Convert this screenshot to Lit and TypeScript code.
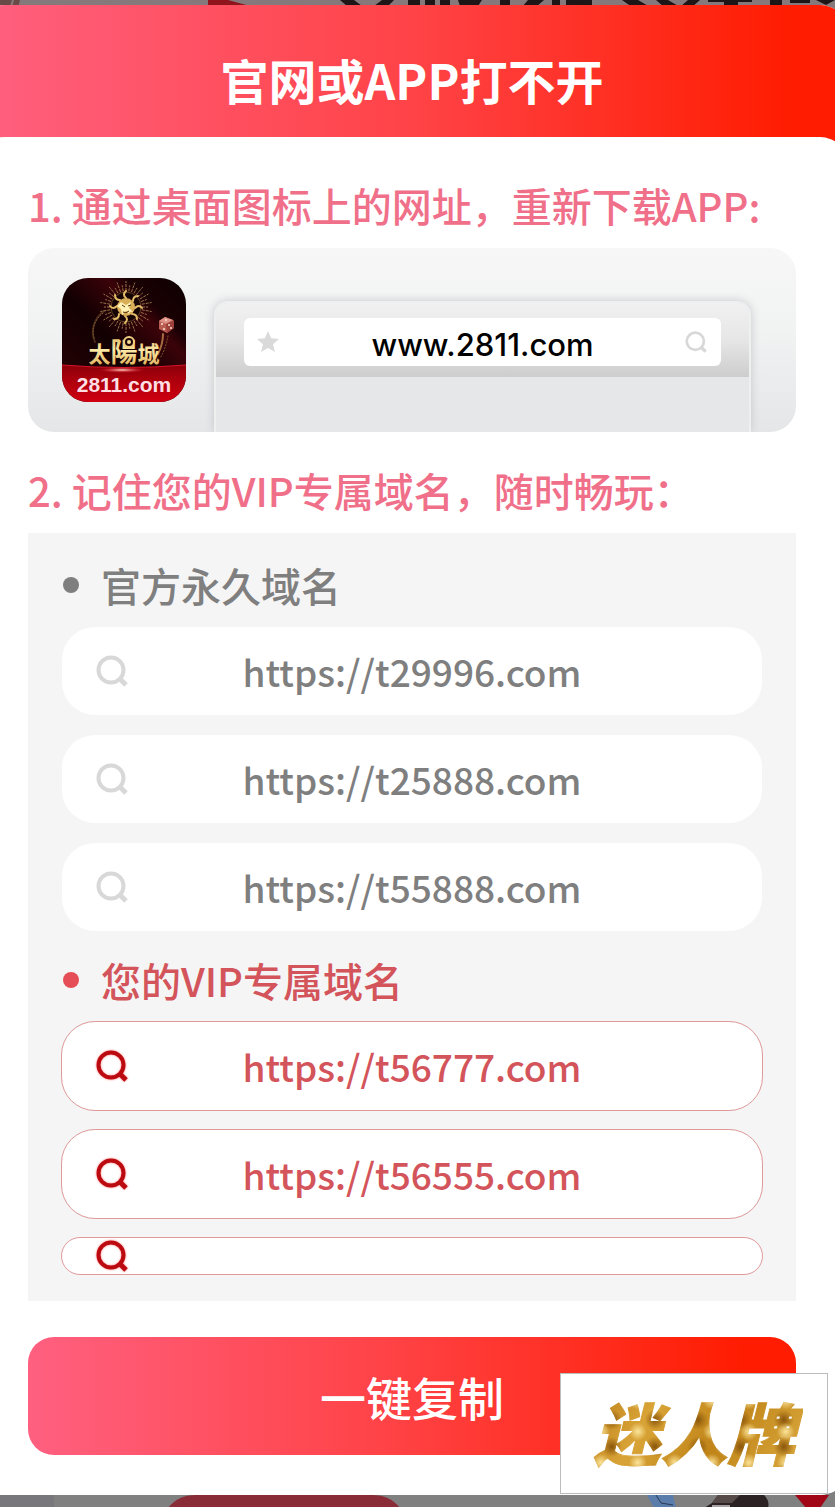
import { LitElement, html, css, svg } from "lit";
import { customElement, property } from "lit/decorators.js";

interface DomainGroup {
  title: string;
  vip: boolean;
  domains: string[];
}

const GROUPS: DomainGroup[] = [
  {
    title: "官方永久域名",
    vip: false,
    domains: ["https://t29996.com", "https://t25888.com", "https://t55888.com"],
  },
  {
    title: "您的VIP专属域名",
    vip: true,
    domains: ["https://t56777.com", "https://t56555.com", ""],
  },
];

const rays = (count: number, cx: number, cy: number, from: number, to: number) =>
  Array.from({ length: count }, (_, i) => {
    const a = (i / count) * Math.PI * 2;
    const end = i % 2 ? to : to - 4;
    return svg`<line
      x1=${cx + Math.cos(a) * from} y1=${cy + Math.sin(a) * from}
      x2=${cx + Math.cos(a) * end} y2=${cy + Math.sin(a) * end} />`;
  });

@customElement("app-icon")
export class AppIcon extends LitElement {
  static styles = css`
    :host {
      display: block;
      flex: none;
      width: 124px;
      height: 124px;
      border-radius: 26px;
      overflow: hidden;
    }

    svg {
      display: block;
      width: 100%;
      height: 100%;
    }

    .name {
      font: bold 22px "Noto Sans CJK TC", sans-serif;
    }

    .big {
      font-size: 27px;
    }

    .domain {
      font: bold 21px "Liberation Sans", sans-serif;
    }
  `;

  render() {
    return html`
      <svg viewBox="0 0 124 124">
        <defs>
          <linearGradient id="night" x1="0" y1="1" x2="1" y2="0">
            <stop offset="0" stop-color="#2a0205" />
            <stop offset="0.45" stop-color="#120002" />
            <stop offset="0.68" stop-color="#3a0309" />
            <stop offset="0.76" stop-color="#1a0103" />
            <stop offset="1" stop-color="#0c0001" />
          </linearGradient>
          <linearGradient id="base" x1="0" y1="0" x2="0" y2="1">
            <stop offset="0" stop-color="#8a0009" />
            <stop offset="0.35" stop-color="#a8000c" />
            <stop offset="1" stop-color="#d00010" />
          </linearGradient>
          <linearGradient id="gold" x1="0" y1="0" x2="0" y2="1">
            <stop offset="0" stop-color="#d9a84e" />
            <stop offset="0.5" stop-color="#fbe9a6" />
            <stop offset="1" stop-color="#d8a447" />
          </linearGradient>
          <radialGradient id="spark">
            <stop offset="0" stop-color="#ffd9c8" />
            <stop offset="1" stop-color="#e00016" stop-opacity="0" />
          </radialGradient>
        </defs>
        <rect width="124" height="124" fill="url(#night)" />
        <g fill="none" stroke="#8a6238" stroke-linecap="round">
          <path d="M33 64C28 53 32 40 42 33" stroke-width="2" opacity=".4" />
          <path d="M32 60C29 50 34 40 41 35" stroke-width="1" stroke-dasharray="1 2" />
          <path d="M101 56C101 64 99 70 96 76" stroke="#d49a58" stroke-width="2" opacity=".7" />
          <path d="M106 58C104 68 101 76 98 80" stroke-width="1" stroke-dasharray="1 2" />
        </g>
        <g stroke="#94764a" stroke-width="1" stroke-dasharray="3 1">${rays(36, 64, 29, 16, 26)}</g>
        <circle cx="64" cy="29" r="15" fill="#160304" stroke="#5d4426" />
        <g fill="none" stroke="#e5bd69" stroke-width="2" stroke-linecap="round">
          <path
            d="M64 20q-4-3 0-7M71 23q0-5 5-5M73 30q4-4 7 0M70 36q5 0 5 5M63 38q4 3 0 7M57 36q0 5-5 5M55 28q-4 4-7 0M58 22q-5 0-5-5"
          />
        </g>
        <circle cx="64" cy="29" r="9" fill="#d9ae58" />
        <path d="M59 24l5 3 5-3-2 6 4 4-7-1-4 4-1-6-4-3zM65 31l4 2-3 3z" fill="#fff0b3" />
        <path d="M60 27l3 2M66 28l3-1M61 34q3 2 6-1" fill="none" stroke="#553511" />
        <g>
          <path d="M97 43l6-4 8 3 1 8-7 5-8-4z" fill="#b95c52" />
          <path d="M97 43l6-4 8 3-7 4z" fill="#dd9085" />
          <path d="M104 46l8-4v8l-7 5z" fill="#9d4039" />
          <g fill="#ffe2d6">
            <circle cx="100" cy="46" r="1" />
            <circle cx="102" cy="51" r="1" />
            <circle cx="107" cy="47" r="1" />
            <circle cx="109" cy="50" r="1" />
            <circle cx="104" cy="42" r="1" />
          </g>
        </g>
        <path d="M0 87Q62 92 124 87V124H0Z" fill="url(#base)" />
        <path d="M0 87Q62 92 124 87" fill="none" stroke="#d8152a" />
        <ellipse cx="60" cy="92" rx="24" ry="3" fill="url(#spark)" />
        <text class="name" x="62" y="84" fill="url(#gold)" text-anchor="middle"
          >太<tspan class="big">陽</tspan>城</text
        >
        <circle cx="67" cy="64" r="5" fill="#1c0608" stroke="#efcf80" stroke-width="2" />
        <circle cx="67" cy="64" r="2" fill="#f6dc92" />
        <text class="domain" x="62" y="114" fill="#ffdfe4" text-anchor="middle">2811.com</text>
      </svg>
    `;
  }
}

@customElement("search-icon")
export class SearchIcon extends LitElement {
  static styles = css`
    :host {
      display: block;
      flex: none;
      width: 32px;
      height: 32px;
    }

    svg {
      display: block;
      width: 100%;
      height: 100%;
      overflow: visible;
    }
  `;

  render() {
    return html`
      <svg viewBox="0 0 32 32" fill="none" stroke="currentColor" stroke-width="4">
        <circle cx="15" cy="15" r="12.5" />
        <path d="M23.500 23.500L30 30" stroke-width="5" />
      </svg>
    `;
  }
}

@customElement("domain-row")
export class DomainRow extends LitElement {
  @property() url = "";
  @property({ type: Boolean, reflect: true }) vip = false;

  static styles = css`
    :host {
      display: block;
      color: #7f7f7f;
    }

    .row {
      display: grid;
      grid-template-columns: 1fr auto 1fr;
      align-items: center;
      min-height: 38px;
      box-sizing: border-box;
      padding: 0 34px;
      border: 1px solid transparent;
      border-radius: 34px;
      background: white;
      background-clip: padding-box;
      color: inherit;
      font-size: 37px;
      line-height: 60px;
      text-decoration: none;
    }

    .filled {
      padding: 14px 34px;
    }

    search-icon {
      color: #d8d8d8;
    }

    :host([vip]) {
      color: #d3545a;
    }

    :host([vip]) .row {
      border-color: #e09a9a;
    }

    :host([vip]) search-icon {
      color: #bb0a10;
      filter: drop-shadow(0 0 1px #ff8080);
    }
  `;

  render() {
    if (!this.url) {
      return html`<div class="row"><search-icon></search-icon></div>`;
    }
    return html`
      <a class="row filled" href=${this.url}>
        <search-icon></search-icon>
        <span>${this.url}</span>
      </a>
    `;
  }
}

@customElement("app-root")
export class AppRoot extends LitElement {
  static styles = css`
    :host {
      display: block;
      position: relative;
      overflow: hidden;
      background: #808080;
      font-family: "Noto Sans CJK SC", "Noto Sans", sans-serif;
      font-weight: 500;
    }

    h1,
    h2,
    h3,
    ul {
      margin: 0;
      padding: 0;
      font-weight: inherit;
      list-style: none;
    }

    .behind {
      display: block;
      width: 100%;
    }

    .behind.top {
      height: 12px;
    }

    .behind.bottom {
      height: 41px;
      margin-top: -28px;
    }

    .dialog {
      position: relative;
      z-index: 1;
      margin: -7px -13px 0 -24px;
      border-radius: 28px;
      overflow: hidden;
      background: white;
    }

    .header {
      padding: 46px 0 58px;
      background: linear-gradient(90deg, #ff6080, #ff4347 50%, #ff1c00 94%);
      color: white;
      font-size: 48px;
      line-height: 56px;
      text-align: center;
      font-weight: bold;
    }

    .body {
      margin-top: -28px;
      padding: 38px 52px 40px;
      border-radius: 28px 28px 0 0;
      background: white;
    }

    .heading {
      color: #f0708a;
      font-size: 40px;
      line-height: 60px;
      white-space: nowrap;
      margin-bottom: 13px;
    }

    .preview {
      display: flex;
      gap: 28px;
      padding: 30px 45px 0 34px;
      margin-bottom: 28px;
      border-radius: 26px;
      overflow: hidden;
      background: linear-gradient(#f7f7f7, #f1f2f2 45%, #e4e6e8);
    }

    app-icon {
      margin-bottom: 30px;
    }

    .browser {
      flex: 1;
      min-width: 0;
      margin-top: 23px;
      border: 2px solid #eeefef;
      border-bottom: 0;
      border-radius: 14px 14px 0 0;
      background: #e6e7e9;
      box-shadow: 0 0 10px #c4c8cb;
      overflow: hidden;
    }

    .toolbar {
      padding: 15px 28px 11px;
      background: linear-gradient(#f1f1f1, #e6e6e6 50%, #cdcdcd);
    }

    .address {
      display: flex;
      align-items: center;
      height: 48px;
      padding: 0 14px 0 12px;
      border-radius: 6px;
      background: white;
    }

    .address svg {
      flex: none;
      width: 24px;
      height: 24px;
    }

    .address input {
      flex: 1;
      min-width: 0;
      padding: 4px 0 0;
      border: 0;
      outline: 0;
      background: none;
      color: black;
      font: 500 31px Inter, sans-serif;
      text-align: center;
    }

    .address search-icon {
      width: 22px;
      height: 22px;
      color: #d8d8d8;
    }

    .panel {
      display: flex;
      flex-direction: column;
      gap: 18px;
      padding: 22px 33px 26px;
      background: #f5f5f5;
    }

    .group {
      color: #7f7f7f;
    }

    .vip {
      color: #d3545a;
    }

    .group h3 {
      display: flex;
      align-items: center;
      gap: 22px;
      padding-left: 2px;
      margin-bottom: 11px;
      font-size: 40px;
      line-height: 60px;
    }

    .dot {
      width: 16px;
      height: 16px;
      border-radius: 50%;
      background: currentColor;
    }

    .vip .dot {
      background: #e54e56;
    }

    .group ul {
      display: grid;
      gap: 18px;
    }

    .copy {
      display: block;
      width: 100%;
      margin-top: 36px;
      padding: 28px 0;
      border: 0;
      border-radius: 26px;
      background: linear-gradient(90deg, #ff6080, #ff4347 46%, #ff1c00 94%);
      color: white;
      font: inherit;
      font-size: 46px;
      line-height: 62px;
    }

    .badge {
      position: absolute;
      z-index: 2;
      right: 7px;
      bottom: 14px;
      box-sizing: border-box;
      width: 268px;
      padding: 12px 0 18px;
      border: 1px solid #bbbdbd;
      background: white;
      font-size: 67px;
      line-height: 89px;
      text-align: center;
    }

    .badge span {
      padding: 0 8px;
      background:
        radial-gradient(circle at 40% 60%, #fbe49a, transparent 9px) 0 0 / 37px 31px,
        radial-gradient(circle at 60% 40%, #8a560c, transparent 10px) 0 0 / 43px 27px,
        linear-gradient(120deg, #b87a16, #d9a437 30%, #c08418 60%, #dcab40);
      background-clip: text;
      -webkit-background-clip: text;
      -webkit-text-stroke: 1px transparent;
      color: transparent;
      font-style: italic;
      font-weight: 900;
    }
  `;

  renderGroup(group: DomainGroup) {
    return html`
      <section class="group ${group.vip ? "vip" : ""}">
        <h3><span class="dot"></span>${group.title}</h3>
        <ul>
          ${group.domains.map(
            (url) => html`<li><domain-row .url=${url} ?vip=${group.vip}></domain-row></li>`
          )}
        </ul>
      </section>
    `;
  }

  render() {
    return html`
      <svg class="behind top" viewBox="0 0 835 12" preserveAspectRatio="none">
        <rect width="835" height="12" fill="#85797b" />
        <path d="M0 0h12l-4 12H0zM14 0h6l-3 12h-6z" fill="#6a4a47" />
        <path d="M208 0h20l22 6v6h-42z" fill="#90141c" />
        <path
          d="M340 0h14l8 6h12l8-6h12l-12 12h-28zM408 0h12v12h-12zM425 0h10v12h-10zM440 0h10v12h-10zM458 0h24l-4 6h-18zM500 0h10v12h-10zM528 0h16l-8 7h-14zM552 0h8v12h-8zM566 0h26v6h-26zM622 0h16l12 7h-18zM656 0h12l12 7h-16zM688 0h12l-8 7h-12zM708 0h44v2h-44zM724 0h14v12h-14zM770 0h12v12h-12zM790 0h20v3h-20zM816 0h19l-9 5z"
          fill="#1d1516"
        />
      </svg>

      <main class="dialog">
        <h1 class="header">官网或APP打不开</h1>
        <div class="body">
          <h2 class="heading">1. 通过桌面图标上的网址，重新下载APP:</h2>
          <div class="preview">
            <app-icon></app-icon>
            <div class="browser">
              <div class="toolbar">
                <label class="address">
                  <svg viewBox="0 0 24 24">
                    <path
                      d="M12 1l3.200 7.300 7.800.700-5.900 5.300L18.900 22 12 17.900 5.100 22l1.800-7.700L1 9l7.800-.700z"
                      fill="#dadada"
                    />
                  </svg>
                  <input type="text" value="www.2811.com" aria-label="www.2811.com" readonly />
                  <search-icon></search-icon>
                </label>
              </div>
            </div>
          </div>

          <h2 class="heading">2. 记住您的VIP专属域名，随时畅玩：</h2>
          <div class="panel">${GROUPS.map((group) => this.renderGroup(group))}</div>
          <button class="copy" type="button">一键复制</button>
        </div>
      </main>

      <svg class="behind bottom" viewBox="0 0 835 41" preserveAspectRatio="none">
        <rect width="54" height="41" fill="#77777c" />
        <path d="M168 41q10-13 28-13h176q18 0 28 13z" fill="#8a2c38" />
        <path d="M647 28h26l3 13h-22z" fill="#5a7dab" />
        <path d="M656 28l5 8 12 2" fill="none" stroke="#2b3b57" />
        <path d="M718 28h46q6 6 4 13h-64l8-5z" fill="#2a2223" />
        <path d="M718 28h22l-8 8h-20z" fill="#564b49" />
        <path d="M712 38h18v3h-18z" fill="#a5a3a3" />
        <path d="M795 28h34l-9 13h-14z" fill="#a00616" />
      </svg>

      <div class="badge"><span>迷人牌</span></div>
    `;
  }
}
